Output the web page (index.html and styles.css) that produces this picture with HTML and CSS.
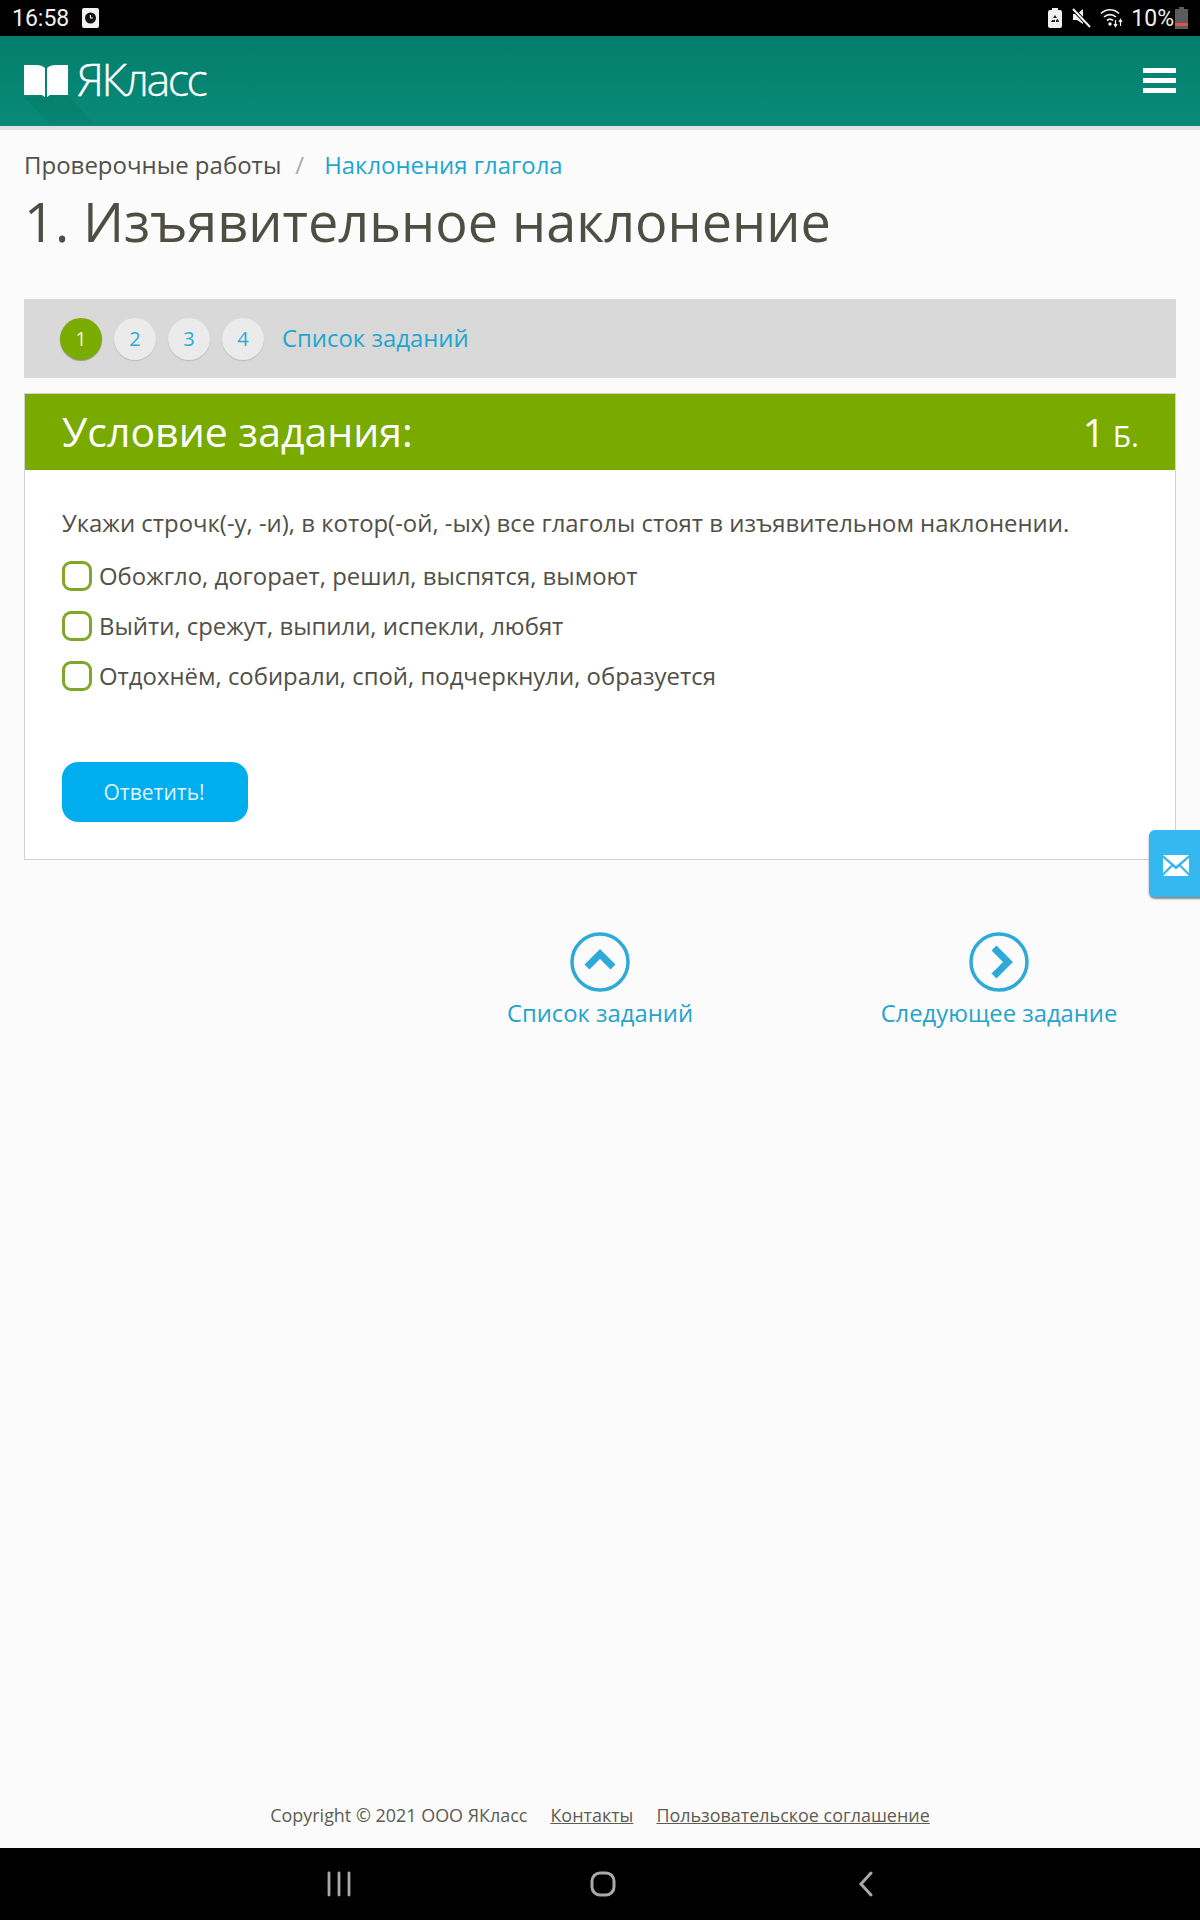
FILE: index.html
```html
<!DOCTYPE html>
<html lang="ru">
<head>
<meta charset="utf-8">
<title>1. Изъявительное наклонение</title>
<link rel="stylesheet" href="styles.css">
</head>
<body>
<div class="screen">
  <div class="statusbar">
    <div class="status-left">
      <span class="clock">16:58</span>
      <svg class="notif" width="17" height="20" viewBox="0 0 17 20"><rect width="17" height="20" rx="2" fill="#f2f2f2"/><circle cx="8.5" cy="10" r="5.5" fill="#111"/><path d="M8.5 7v3h2.5" stroke="#eee" stroke-width="1.2" fill="none"/></svg>
    </div>
    <div class="status-right">
      <svg width="14" height="20" viewBox="0 0 14 20"><path d="M4 0h6v2h2a2 2 0 0 1 2 2v14a2 2 0 0 1-2 2H2a2 2 0 0 1-2-2V4a2 2 0 0 1 2-2h2z" fill="#f0f0f0"/><path d="M7 7l2 3H5zM4 12h3v2H3zM10 11l1 3H8v-2z" fill="#222"/></svg>
      <svg class="st-mute" width="20" height="20" viewBox="0 0 20 20"><path d="M1 6h4l6-5v15l-6-4H1z" fill="#f2f2f2"/><path d="M1 1l17 18" stroke="#000" stroke-width="4"/><path d="M1 1l17 18" stroke="#f2f2f2" stroke-width="2"/></svg>
      <svg class="st-wifi" width="24" height="22" viewBox="0 0 24 22"><g fill="none" stroke="#f2f2f2" stroke-width="1.7"><path d="M1 6.5c5-5 13-5 18 0"/><path d="M4 10c3.500-3.300 8.500-3.300 12 0"/><path d="M7 13.500c2-1.700 4-1.700 6 0"/></g><circle cx="10" cy="17" r="1.700" fill="#f2f2f2"/><path d="M15.500 13v6M14 17l1.500 2.500L17 17M20.500 19v-6M19 15l1.500-2.500L22 15" stroke="#f2f2f2" stroke-width="1.200" fill="none"/></svg>
      <span class="battery-text">10%</span>
      <svg class="st-batt" width="13" height="22" viewBox="0 0 13 22"><path d="M4 0h5v2h4v20H0V2h4z" fill="#5c5c5c"/><rect y="16" width="13" height="3" fill="#e0524f"/></svg>
    </div>
  </div>

  <header class="topbar">
    <a class="logo">
      <svg class="logo-book" width="44" height="33" viewBox="0 0 44 33"><path d="M0 33L26 60H70L44 31H26L21 33z" fill="#000" fill-opacity=".04"/><path d="M0 1h12q6 0 9 3v29l-3-2H0z" fill="#fff"/><path d="M44 1H32q-6 0-9 3v29l3-2h18z" fill="#fff"/></svg>
      <span class="logo-text">ЯКласс</span>
    </a>
    <div class="burger"><span></span><span></span><span></span></div>
  </header>

  <main class="content">
    <nav class="crumbs">
      <span>Проверочные работы</span>
      <span class="crumb-sep">/</span>
      <a class="link">Наклонения глагола</a>
    </nav>
    <h1 class="title">1. Изъявительное наклонение</h1>

    <div class="tasks">
      <span class="num num-active">1</span>
      <a class="num">2</a>
      <a class="num">3</a>
      <a class="num">4</a>
      <a class="link tasks-link">Список заданий</a>
    </div>

    <section class="card">
      <div class="card-head">
        <h2 class="card-title">Условие задания:</h2>
        <div class="score"><span class="score-n">1</span> Б.</div>
      </div>
      <div class="card-body">
        <p class="question">Укажи строчк(-у, -и), в котор(-ой, -ых) все глаголы стоят в изъявительном наклонении.</p>
        <ul class="options">
          <li class="option"><span class="check"></span>Обожгло, догорает, решил, выспятся, вымоют</li>
          <li class="option"><span class="check"></span>Выйти, срежут, выпили, испекли, любят</li>
          <li class="option"><span class="check"></span>Отдохнём, собирали, спой, подчеркнули, образуется</li>
        </ul>
        <button class="answer">Ответить!</button>
      </div>
    </section>

    <div class="pager">
      <a class="pager-item pager-list">
        <svg width="60" height="60" viewBox="0 0 60 60"><circle cx="30" cy="30" r="28" fill="none" stroke="#2fa9d8" stroke-width="3.500"/><path d="M17 35l13-13 13 13" fill="none" stroke="#2fa9d8" stroke-width="7"/></svg>
        <span>Список заданий</span>
      </a>
      <a class="pager-item pager-next">
        <svg width="60" height="60" viewBox="0 0 60 60"><circle cx="30" cy="30" r="28" fill="none" stroke="#2fa9d8" stroke-width="3.500"/><path d="M25 16l14 14-14 14" fill="none" stroke="#2fa9d8" stroke-width="7"/></svg>
        <span>Следующее задание</span>
      </a>
    </div>
  </main>

  <footer class="foot">
    <span>Copyright © 2021 ООО ЯКласс</span>
    <a class="foot-link">Контакты</a>
    <a class="foot-link">Пользовательское соглашение</a>
  </footer>

  <div class="navbar">
    <svg width="26" height="26" viewBox="0 0 26 26"><path d="M3 2v22M13 2v22M23 2v22" stroke="#a9a9a9" stroke-width="2.800" stroke-linecap="round"/></svg>
    <svg width="26" height="26" viewBox="0 0 26 26"><rect x="2" y="2" width="22" height="22" rx="8" fill="none" stroke="#a9a9a9" stroke-width="3"/></svg>
    <svg width="18" height="26" viewBox="0 0 18 26"><path d="M14 2L4 13l10 11" fill="none" stroke="#a9a9a9" stroke-width="3" stroke-linecap="round"/></svg>
  </div>

  <a class="mail">
    <svg width="26" height="21" viewBox="0 0 26 21"><path d="M0 0h26L13 11z" fill="#fff"/><path d="M0 3l8 7-8 8zM26 3l-8 7 8 8zM0 21l9.500-9.500L13 14.500l3.500-3L26 21z" fill="#fff"/></svg>
  </a>
</div>
</body>
</html>
```

FILE: styles.css
```css
* { box-sizing: border-box; }
html, body { margin: 0; padding: 0; }
body { font-family: "Open Sans", "Noto Sans", sans-serif; color: #505048; background: #fbfbfb; }
a { text-decoration: none; }
.screen { position: relative; width: 1200px; height: 1920px; display: flex; flex-direction: column; overflow: hidden; }

.statusbar { height: 36px; background: #000; color: #f0f0f0; display: flex; justify-content: space-between; align-items: center; padding: 0 12px 0 12px; flex: none; position: relative; z-index: 2; }
.status-left { display: flex; align-items: center; gap: 13px; }
.clock { font-family: "Roboto", sans-serif; font-size: 23px; }
.status-right { display: flex; align-items: center; }
.st-mute { margin-left: 10px; }
.st-wifi { margin-left: 8px; }
.battery-text { font-family: "Roboto", sans-serif; font-size: 23px; margin-left: 7px; }
.st-batt { margin-left: 1px; }

.topbar { height: 90px; flex: none; background: linear-gradient(#047e6d, #088a78); display: flex; justify-content: space-between; align-items: center; padding: 0 24px; box-shadow: 0 4px 0 #e2e2e2; position: relative; overflow: clip; overflow-clip-margin: 0; }
.logo { display: flex; align-items: center; gap: 9px; color: #fff; margin-top: -5px; }
.logo-book { overflow: visible; margin-top: 3px; }
.logo-text { font-family: "Open Sans", sans-serif; font-weight: 300; font-size: 45px; letter-spacing: -2.6px; line-height: 50px; -webkit-text-stroke: 0.3px #fff; }
.burger { display: flex; flex-direction: column; gap: 5px; margin-top: -2px; }
.burger span { display: block; width: 33px; height: 5px; background: #fff; }

.content { flex: 1; padding: 22px 24px 0; }
.crumbs { font-size: 24px; line-height: 34px; display: flex; }
.crumb-sep { color: #aaa; margin: 0 20px 0 14px; }
.link { color: #1fa6d0; font-size: 23.9px; }
.title { font-weight: 400; font-size: 54px; line-height: 72px; margin: 3px 0 0; color: #4e4e42; }

.tasks { margin-top: 42px; height: 79px; background: #d9d9d9; display: flex; align-items: center; padding-left: 36px; gap: 12px; }
.num { width: 42px; height: 42px; border-radius: 50%; background: #ebebeb; color: #2fa9d8; font-size: 20px; display: flex; align-items: center; justify-content: center; box-shadow: 0 1px 1px #bbb; }
.num-active { background: #7aab00; color: #eef5d0; box-shadow: 0 1px 1px #999; }
.tasks-link { margin: -2px 0 0 6px; }

.card { margin-top: 15px; border: 1px solid #d2d2d2; background: #fff; height: 467px; }
.card-head { height: 76px; background: #78aa00; color: #fff; display: flex; justify-content: space-between; align-items: center; padding: 0 36px; }
.card-title { font-weight: 400; font-size: 41px; margin: -2px 0 0 1px; }
.score { font-size: 30px; margin-top: -2px; }
.score-n { font-size: 39px; }
.card-body { padding: 33px 37px 0; }
.question { font-size: 23.9px; line-height: 40px; margin: 0; }
.options { list-style: none; margin: 7px 0 0; padding: 0; }
.option { font-size: 23.9px; height: 50px; display: flex; align-items: center; gap: 7px; }
.check { width: 30px; height: 30px; margin-top: 2px; border: 3px solid #7fa82a; border-radius: 9px; background: #fff; flex: none; }
.answer { display: block; margin-top: 62px; width: 186px; height: 60px; padding: 0 8px 0 6px; border: 0; border-radius: 16px; background: #00adef; color: #dff6ff; font-family: "Open Sans", sans-serif; font-size: 21px; }

.pager { display: flex; margin-top: 72px; padding-left: 483px; }
.pager-item { display: flex; flex-direction: column; align-items: center; color: #25a3cd; font-size: 23.8px; gap: 5px; white-space: nowrap; }
.pager-list { width: 186px; }
.pager-next { width: 238px; margin-left: 187px; }

.foot { flex: none; height: 49px; display: flex; justify-content: center; gap: 23px; align-items: center; font-size: 17.95px; color: #5c5c52; padding-bottom: 17px; }
.foot-link { color: #5c5c52; text-decoration: underline; }

.navbar { height: 72px; flex: none; background: #000; display: flex; align-items: center; padding-left: 326px; }
.navbar svg:nth-child(2) { margin-left: 238px; }
.navbar svg:nth-child(3) { margin-left: 241px; }

.mail { position: absolute; left: 1149px; top: 830px; width: 60px; height: 67px; border-radius: 6px; background: #35b8ef; box-shadow: 0 2px 2px #888; display: flex; align-items: center; padding: 3px 0 0 14px; }
```
